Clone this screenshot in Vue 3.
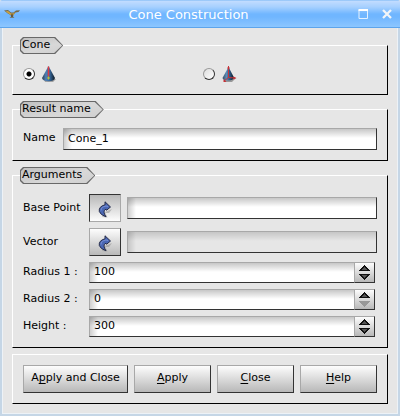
<script setup>
import { ref, reactive } from 'vue'

const shape = ref('standard')
const resultName = ref('Cone_1')
const picking = ref('base')
const basePoint = ref('')
const vector = ref('')

const shapes = [
  { id: 'standard', label: 'Cone from base point and vector' },
  { id: 'origin', label: 'Cone at origin' },
]

const dimensions = reactive([
  { id: 'radius1', label: 'Radius 1 :', value: 100 },
  { id: 'radius2', label: 'Radius 2 :', value: 0 },
  { id: 'height', label: 'Height :', value: 300 },
])

const actions = [
  { before: 'A', key: 'p', after: 'ply and Close' },
  { before: '', key: 'A', after: 'pply' },
  { before: '', key: 'C', after: 'lose' },
  { before: '', key: 'H', after: 'elp' },
]

function step(item, delta) {
  item.value = Math.max(0, Number(item.value) + delta)
}
</script>

<template>
  <main class="window">
    <header class="titlebar">
      <svg class="app-icon" viewBox="0 0 16 10" aria-hidden="true">
        <path d="M0 1.500 L4 1 L7 3.500 L9.500 3.500 L12 1.600 L16 1.200 L14.500 3 L11.500 3.400 L9.500 6 L9 7.500 L10.500 8.800 L5.500 8.800 L7.200 7.500 L6.500 6 L3.500 4.300 Z" fill="#75694a" />
        <path d="M1.500 2.500 L4 2 L7 4.500 H9.500 L12 2.600 L9 6.500 H7.600 Z" fill="#cba446" />
        <path d="M8 5 V7.500" stroke="#352f2b" />
      </svg>
      <h1>Cone Construction</h1>
      <button class="caption" type="button" aria-label="Maximize">
        <svg viewBox="0 0 10 10" width="10" height="10"><path d="M1 1V9.500H9.500V1" fill="none" stroke="#e4f1ff" /><path d="M.5 1H10" stroke="#fff" stroke-width="2" /></svg>
      </button>
      <button class="caption" type="button" aria-label="Close window">
        <svg viewBox="0 0 10 10" width="10" height="10"><path d="M1 1L9 9M9 1L1 9" stroke="#f2f5f8" stroke-width="2.300" /></svg>
      </button>
    </header>

    <form class="body" @submit.prevent>
      <fieldset class="group">
        <legend>
          <span class="tag">Cone</span>
        </legend>
        <div class="shapes">
          <label v-for="item in shapes" :key="item.id" class="shape">
            <input v-model="shape" type="radio" name="shape" :value="item.id" :aria-label="item.label" />
            <svg v-if="item.id === 'standard'" class="cone" viewBox="0 0 16 18" aria-hidden="true">
              <defs>
                <linearGradient id="coneA" x1="0" x2="1">
                  <stop offset="0" stop-color="#2c3c4c" />
                  <stop offset=".3" stop-color="#4f80b5" />
                  <stop offset=".6" stop-color="#35679b" />
                  <stop offset="1" stop-color="#101820" />
                </linearGradient>
              </defs>
              <path d="M3 14 L15 14 L12 17 H4Z" fill="#777" opacity=".6" />
              <path d="M7.500 1 L14 13 Q13 16.300 7.500 16.300 Q2 16.300 1 13 Z" fill="url(#coneA)" />
              <path d="M7.500 1.500 V11.500" stroke="#e03a40" stroke-width="1.500" />
              <path d="M6 13 H9 M7.500 11.500 V14.500" stroke="#b8c038" />
            </svg>
            <svg v-else class="cone" viewBox="0 0 16 18" aria-hidden="true">
              <defs>
                <linearGradient id="coneB" x1="0" x2="1">
                  <stop offset="0" stop-color="#3c5064" />
                  <stop offset=".35" stop-color="#5c8cb8" />
                  <stop offset=".65" stop-color="#285580" />
                  <stop offset="1" stop-color="#10151b" />
                </linearGradient>
              </defs>
              <path d="M3 14 L15 13 L11 17 H4Z" fill="#777" opacity=".7" />
              <path d="M7.500 2 L13 12.500 Q12.500 15.500 7 15.500 Q2 15.500 1.500 13 Z" fill="url(#coneB)" />
              <path d="M7.500 1 V12.500 L14 13 M7.500 12.500 L3 16" fill="none" stroke="#c9343a" />
              <path d="M6 3.500 L7.500 1 L9 3.500Z M2.500 14 V17 H5.500Z M12.500 11.500 L15.500 13 L12.500 14.500Z" fill="#c43238" />
            </svg>
          </label>
        </div>
      </fieldset>

      <fieldset class="group">
        <legend>
          <span class="tag">Result name</span>
        </legend>
        <div class="name-row">
          <label for="result-name">Name</label>
          <input id="result-name" v-model="resultName" class="field" type="text" />
        </div>
      </fieldset>

      <fieldset class="group">
        <legend>
          <span class="tag">Arguments</span>
        </legend>
        <div class="arguments">
          <div class="arg-row">
            <label for="base-point">Base Point</label>
            <button class="push pick" :class="{ down: picking === 'base' }" type="button" aria-label="Select base point" @click="picking = 'base'">
              <svg viewBox="0 0 14 17" width="14" height="17">
                <path d="M4 16 L9.500 16.500 L7 11 L14 8 L11 12 L7 12Z" fill="#888" opacity=".5" />
                <path d="M7 .8 L12.500 6 L8.500 9.300 L8 8.200 Q5.800 9 6 11 Q6.200 13.500 8 15.800 Q2.500 14 1.300 10.500 Q.5 5.500 7 3.800Z" fill="#4a67b4" stroke="#262c48" />
                <path d="M3 9.500 Q3 5.800 8 5 L10 5.500" fill="none" stroke="#7890d4" />
              </svg>
            </button>
            <input id="base-point" v-model="basePoint" class="field" type="text" readonly />
          </div>
          <div class="arg-row">
            <label for="vector">Vector</label>
            <button class="push pick" :class="{ down: picking === 'vector' }" type="button" aria-label="Select vector" @click="picking = 'vector'">
              <svg viewBox="0 0 14 17" width="14" height="17">
                <path d="M4 16 L9.500 16.500 L7 11 L14 8 L11 12 L7 12Z" fill="#888" opacity=".5" />
                <path d="M7 .8 L12.500 6 L8.500 9.300 L8 8.200 Q5.800 9 6 11 Q6.200 13.500 8 15.800 Q2.500 14 1.300 10.500 Q.5 5.500 7 3.800Z" fill="#4a67b4" stroke="#262c48" />
                <path d="M3 9.500 Q3 5.800 8 5 L10 5.500" fill="none" stroke="#7890d4" />
              </svg>
            </button>
            <input id="vector" v-model="vector" class="field" type="text" :disabled="picking !== 'vector'" />
          </div>
          <div v-for="item in dimensions" :key="item.id" class="spin-row">
            <label :for="item.id">{{ item.label }}</label>
            <div class="spin">
              <input :id="item.id" v-model="item.value" class="field" type="text" inputmode="decimal" />
              <div class="steps">
                <button type="button" :aria-label="'Increase ' + item.id" @click="step(item, 10)">
                  <svg viewBox="0 0 11 6" width="11" height="6" shape-rendering="crispEdges">
                    <path d="M5 0H6V1H7V2H8V3H9V4H10V5H11V6H0V5H1V4H2V3H3V2H4V1H5Z" fill="#111" />
                    <path d="M5 2H6V3H7V4H8V5H3V4H4V3H5Z" fill="#555" />
                  </svg>
                </button>
                <button type="button" :aria-label="'Decrease ' + item.id" :disabled="Number(item.value) <= 0" @click="step(item, -10)">
                  <svg viewBox="0 0 11 6" width="11" height="6" shape-rendering="crispEdges">
                    <path class="tri" d="M0 0H11V1H10V2H9V3H8V4H7V5H6V6H5V5H4V4H3V3H2V2H1V1H0Z" fill="#111" />
                    <path class="tri" d="M3 1H8V2H7V3H6V4H5V3H4V2H3Z" fill="#555" />
                  </svg>
                </button>
              </div>
            </div>
          </div>
        </div>
      </fieldset>

      <div class="group actions">
        <button v-for="action in actions" :key="action.after" class="push" type="button">{{ action.before }}<u>{{ action.key }}</u>{{ action.after }}</button>
      </div>
    </form>
  </main>
</template>

<style>
body {
  margin: 0;
  background: #e6e6e6;
}
</style>

<style scoped>
.window,
.window * {
  box-sizing: border-box;
}

.window {
  display: flex;
  flex-direction: column;
  min-height: 100vh;
  color: #000;
  background: #e6e6e6;
  font: 11px/14px "DejaVu Sans", sans-serif;
}

button,
input {
  margin: 0;
  color: inherit;
  font: inherit;
}

.titlebar {
  display: flex;
  align-items: center;
  height: 28px;
  padding: 0 7px 0 4px;
  border-bottom: 1px solid #5ca4ec;
  border-radius: 2px 2px 0 0;
  background: linear-gradient(#76b6f4 0, #c2dcff 1px, #a6d0ff 7px, #70b6ff 14px, #70b6ff 17px, #8cc6ff 27px);
}

.app-icon {
  width: 16px;
  height: 10px;
}

h1 {
  flex: 1;
  margin: 0;
  padding: 2px 0 0 6px;
  color: #fff;
  font-size: 13px;
  font-weight: 400;
  line-height: 18px;
  text-align: center;
}

.caption {
  display: grid;
  place-items: center;
  width: 24px;
  height: 20px;
  padding: 0;
  border: 0;
  background: none;
}

.caption:last-child {
  width: 12px;
  margin-left: 6px;
}

.body {
  display: flex;
  flex: 1;
  flex-direction: column;
  gap: 6px;
  padding: 9px;
  border: solid #c5d6e6;
  border-width: 0 2px 2px;
  box-shadow: inset 1px 0 #edf2f7, inset -1px -1px #edf2f7;
}

.group {
  min-width: 0;
  margin: 0 1px;
  padding: 10px;
  border: 1px solid;
  border-color: #fff #000 #000 #fff;
}

legend {
  height: 17px;
  margin-left: -3px;
  padding: 0;
}

.tag {
  position: relative;
  z-index: 0;
  display: block;
  height: 17px;
  padding: 1px 13px 0 2px;
  background: #686868;
  clip-path: polygon(3px 0, calc(100% - 8px) 0, 100% 50%, calc(100% - 8px) 100%, 3px 100%, 0 14px, 0 3px);
}

.tag::before {
  content: "";
  position: absolute;
  inset: 1px;
  z-index: -1;
  background: linear-gradient(165deg, #c0c0c0, #d8d8d8 60%, #cfcfcf);
  clip-path: polygon(3px 0, calc(100% - 8px) 0, 100% 50%, calc(100% - 8px) 100%, 3px 100%, 0 12px, 0 3px);
}

.shapes {
  display: grid;
  grid-template-columns: 1fr 1fr;
  gap: 6px;
}

label {
  padding-bottom: 2px;
  white-space: nowrap;
}

.shape {
  display: flex;
  align-items: center;
  gap: 6px;
  height: 20px;
  padding: 0;
}

.shape input {
  appearance: none;
  width: 12px;
  height: 12px;
  border: 1px solid;
  border-color: #999 #333 #333 #999;
  border-radius: 50%;
  background: linear-gradient(135deg, #ddd, #fff);
}

.shape input:checked {
  background: radial-gradient(circle, #000 2px, #fff 3px);
}

.cone {
  width: 16px;
  height: 18px;
}

.name-row {
  display: grid;
  grid-template-columns: minmax(34px, auto) 1fr;
  align-items: center;
  gap: 6px;
}

.field {
  flex: 1;
  width: 100%;
  min-width: 0;
  height: 22px;
  padding: 0 4px 2px;
  border: 1px solid;
  border-color: #a8a8a8 #333 #333 #a8a8a8;
  border-radius: 0;
  outline: 0;
  background:
    linear-gradient(90deg, #00000030, #0000 8px),
    linear-gradient(#00000038, #0000 9px),
    #fff;
}

.field:disabled {
  background:
    linear-gradient(90deg, #00000024, #0000 8px),
    linear-gradient(#00000024, #0000 9px),
    #e6e6e6;
}

.arguments {
  display: grid;
  gap: 6px;
}

.arg-row,
.spin-row {
  display: grid;
  align-items: center;
  column-gap: 6px;
}

.arg-row {
  grid-template-columns: 60px 32px 1fr;
}

.arg-row label {
  padding: 0;
}

.spin-row {
  grid-template-columns: 60px 1fr;
  padding-right: 2px;
}

.push {
  display: block;
  height: 28px;
  padding: 0 4px 2px;
  border: 1px solid;
  border-color: #a8a8a8 #333 #333 #a8a8a8;
  border-radius: 0;
  background: linear-gradient(#fdfdfd, #b8b8b8);
  text-align: center;
  white-space: nowrap;
}

.pick {
  display: grid;
  place-items: center;
  padding: 2px 0 0;
}

.pick.down {
  border-color: #333 #a8a8a8 #a8a8a8 #333;
  background: linear-gradient(#b8b8b8, #fdfdfd);
}

.spin {
  display: flex;
}

.spin .field {
  height: 21px;
  border-right: 0;
}

.steps {
  display: grid;
  align-content: center;
  gap: 3px;
  width: 21px;
  height: 21px;
  border: 1px solid;
  border-color: #a8a8a8 #333 #333 #a8a8a8;
  background: linear-gradient(#fdfdfd, #b8b8b8);
}

.steps button {
  display: grid;
  place-items: center;
  height: 6px;
  padding: 0;
  border: 0;
  background: none;
}

.steps button:disabled .tri {
  fill: #989898;
}

.actions {
  display: grid;
  grid-template-columns: minmax(105px, auto) repeat(3, 1fr);
  gap: 6px;
}

u {
  text-underline-offset: 2px;
  text-decoration-skip-ink: none;
}
</style>
